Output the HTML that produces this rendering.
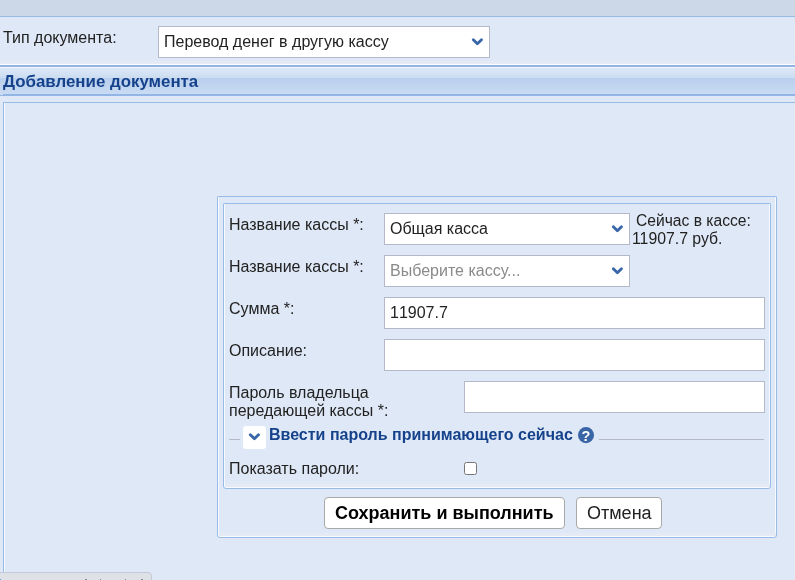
<!DOCTYPE html>
<html><head><meta charset="utf-8">
<style>
*{box-sizing:border-box;margin:0;padding:0}
html,body{width:795px;height:580px;overflow:hidden;background:#dfe8f6;font-family:"Liberation Sans",sans-serif;color:#222}
.abs{position:absolute}
#top{left:0;top:0;width:795px;height:16px;background:#ccd8e8}
#topline{left:0;top:16px;width:795px;height:1px;background:#99bbe8}
.lbl{font-size:16px;line-height:18px;color:#222;white-space:nowrap}
.box{background:#fff;border:1px solid #b5b8c8}
.val{font-size:16px;line-height:18px;color:#222;white-space:nowrap}
#hdr{left:0;top:64px;width:795px;height:32px}
#hdrtxt{left:3px;top:73px;transform-origin:0 0;transform:scaleX(1.054);font-weight:bold;font-size:16px;line-height:18px;color:#15428b;white-space:nowrap}
.frame{border:1px solid #99bbe8;border-radius:1px 1px 3px 3px;box-shadow:inset 1px 0 0 #f7fafe,inset -1px 0 0 #f7fafe,inset 0 -1px 0 #f7fafe}
</style></head><body>
<div id="wrap" style="position:absolute;left:0;top:0;width:795px;height:580px;will-change:transform;opacity:0.999">
<div class="abs" id="top"></div>
<div class="abs" id="topline"></div>

<div class="abs lbl" style="left:3px;top:29px">Тип документа:</div>
<div class="abs box" style="left:158px;top:26px;width:332px;height:32px"></div>
<div class="abs val" style="left:164px;top:33px">Перевод денег в другую кассу</div>
<svg class="abs" style="left:470px;top:36px" width="14" height="12" viewBox="0 0 14 12"><path d="M3.3 3.65 L7.4 7.75 L11.5 3.65" fill="none" stroke="#3866a8" stroke-width="2.8" stroke-linecap="round" stroke-linejoin="round"/></svg>

<!-- header -->
<div class="abs" style="left:0;top:61px;width:795px;height:3px;background:#e5eaf5"></div>
<div class="abs" style="left:0;top:64px;width:795px;height:1px;background:#fbfcfe"></div>
<div class="abs" style="left:0;top:65px;width:795px;height:2px;background:#92b5e5"></div>
<div class="abs" style="left:0;top:67px;width:795px;height:1px;background:#f1f6fc"></div>
<div class="abs" style="left:0;top:68px;width:795px;height:10px;background:linear-gradient(#dde8f7,#cbdcf0)"></div>
<div class="abs" style="left:0;top:78px;width:795px;height:17px;background:linear-gradient(#b8cfee,#cbdcf3)"></div>
<div class="abs" style="left:3px;top:94px;width:792px;height:1px;background:#92b5e5"></div>
<div class="abs" style="left:0;top:95px;width:795px;height:1px;background:#92b5e5"></div>
<div class="abs" id="hdrtxt">Добавление документа</div>

<!-- body panel -->
<div class="abs" style="left:3px;top:102px;width:792px;height:1px;background:#99bbe8"></div>
<div class="abs" style="left:3px;top:102px;width:1px;height:478px;background:#99bbe8"></div>
<div class="abs" style="left:4px;top:103px;width:1px;height:477px;background:#f7fafe"></div>

<!-- form outer -->
<div class="abs frame" style="left:217px;top:196px;width:560px;height:342px"></div>
<div class="abs frame" style="left:223px;top:203px;width:548px;height:286px"></div>

<div class="abs" style="left:219px;top:533px;width:557px;height:3px;background:#e5eaf5"></div>
<div class="abs" style="left:225px;top:484px;width:545px;height:3px;background:#e5eaf5"></div>
<div class="abs lbl" style="left:229px;top:216px">Название кассы *:</div>
<div class="abs box" style="left:384px;top:213px;width:246px;height:32px"></div>
<div class="abs val" style="left:390px;top:220px">Общая касса</div>
<svg class="abs" style="left:610.3px;top:223.2px" width="14" height="12" viewBox="0 0 14 12"><path d="M3.3 3.65 L7.4 7.75 L11.5 3.65" fill="none" stroke="#3866a8" stroke-width="2.8" stroke-linecap="round" stroke-linejoin="round"/></svg>
<div class="abs val" style="left:636px;top:212px;transform-origin:0 0;transform:scaleX(0.977)">Сейчас в кассе:</div>
<div class="abs val" style="left:631.6px;top:230px;transform-origin:0 0;transform:scaleX(0.988)">11907.7 руб.</div>

<div class="abs lbl" style="left:229px;top:258px">Название кассы *:</div>
<div class="abs box" style="left:384px;top:255px;width:246px;height:32px"></div>
<div class="abs val" style="left:390px;top:262px;color:#8a8a8a">Выберите кассу...</div>
<svg class="abs" style="left:610.3px;top:265.1px" width="14" height="12" viewBox="0 0 14 12"><path d="M3.3 3.65 L7.4 7.75 L11.5 3.65" fill="none" stroke="#3866a8" stroke-width="2.8" stroke-linecap="round" stroke-linejoin="round"/></svg>

<div class="abs lbl" style="left:229px;top:300px">Сумма *:</div>
<div class="abs box" style="left:384px;top:297px;width:381px;height:32px"></div>
<div class="abs val" style="left:390px;top:304px;font-kerning:none">11907.7</div>

<div class="abs lbl" style="left:229px;top:342px">Описание:</div>
<div class="abs box" style="left:384px;top:339px;width:381px;height:32px"></div>

<div class="abs lbl" style="left:229px;top:384px">Пароль владельца<br>передающей кассы *:</div>
<div class="abs box" style="left:464px;top:381px;width:301px;height:32px"></div>

<!-- legend -->
<div class="abs" style="left:229.3px;top:439px;width:10.6px;height:1px;background:#b5b8c8"></div>
<div class="abs" style="left:243px;top:426px;width:23px;height:23px;background:#fff;border-radius:3px"></div>
<svg class="abs" style="left:247.1px;top:431.3px" width="14" height="12" viewBox="0 0 14 12"><path d="M3.3 3.65 L7.4 7.75 L11.5 3.65" fill="none" stroke="#3866a8" stroke-width="2.8" stroke-linecap="round" stroke-linejoin="round"/></svg>
<div class="abs" style="left:269px;top:426px;font-weight:bold;font-size:16px;line-height:18px;color:#15428b;white-space:nowrap">Ввести пароль принимающего сейчас</div>
<svg class="abs" style="left:577px;top:426px" width="18" height="18" viewBox="0 0 18 18"><circle cx="9" cy="9.1" r="8.05" fill="#3a66a7"/><text x="9.05" y="14.6" text-anchor="middle" font-family="Liberation Sans" font-weight="bold" font-size="14.5" fill="#fff">?</text></svg>
<div class="abs" style="left:599px;top:439px;width:165px;height:1px;background:#b5b8c8"></div>

<div class="abs lbl" style="left:229px;top:460px">Показать пароли:</div>
<div class="abs" style="left:464px;top:462px;width:13px;height:13px;background:#fff;border:1px solid #767676;border-radius:2.5px"></div>

<!-- buttons -->
<div class="abs" style="left:324px;top:497px;width:241px;height:32px;background:#fff;border:1px solid #a8a8a8;border-radius:4px"></div>
<div class="abs" style="left:335px;top:503px;font-weight:bold;font-size:18px;line-height:20px;color:#000;white-space:nowrap">Сохранить и выполнить</div>
<div class="abs" style="left:576px;top:497px;width:86px;height:32px;background:#fff;border:1px solid #a8a8a8;border-radius:4px"></div>
<div class="abs" style="left:587px;top:503px;font-size:18px;line-height:20px;color:#222;white-space:nowrap">Отмена</div>

<!-- status bubble -->
<div class="abs" style="left:-2px;top:572px;width:154px;height:20px;background:#dee1e6;border:1px solid #c3c9d6;border-radius:0 4px 0 0"></div>
<div class="abs" style="left:0;top:579px;width:1px;height:1px;background:#5aa2e6"></div>
<div class="abs" style="left:85px;top:579px;width:2px;height:1px;background:#8a8d92"></div>
<div class="abs" style="left:100px;top:579px;width:1px;height:1px;background:#8a8d92"></div>
<div class="abs" style="left:125px;top:579px;width:1px;height:1px;background:#8a8d92"></div>
<div class="abs" style="left:141px;top:579px;width:2px;height:1px;background:#8a8d92"></div>
</div>
</body></html>
